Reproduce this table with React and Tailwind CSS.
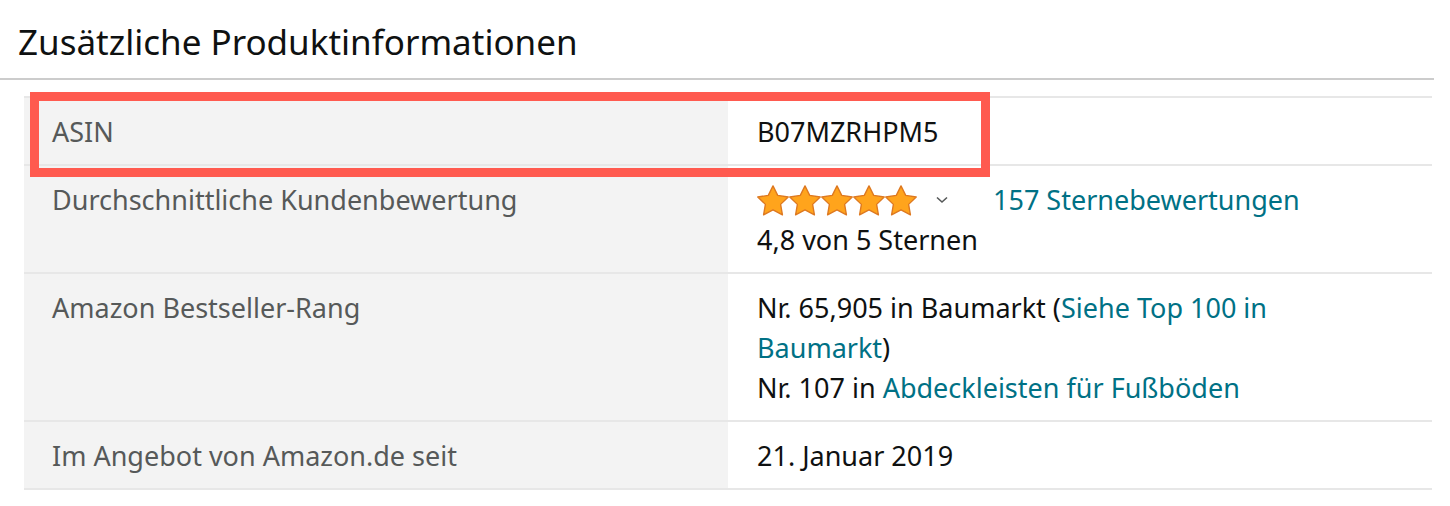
import React from "react";

const font = { fontFamily: '"Noto Sans", "Liberation Sans", sans-serif' };

function Star() {
  return (
    <svg width="32" height="31" viewBox="1.5 1.6 21 20" aria-hidden>
      <polygon
        points="12,2 15.09,8.26 22,9.27 17,14.14 18.18,21.02 12,17.77 5.82,21.02 7,14.14 2,9.27 8.91,8.26"
        fill="#ffa41c"
        stroke="#de7921"
        strokeWidth="0.9"
        strokeLinejoin="round"
      />
    </svg>
  );
}

function Row({ label, children, last }) {
  return (
    <div
      className={`grid grid-cols-[704px_1fr] border-t-2 border-[#e7e7e7] ${
        last ? "border-b-2" : ""
      }`}
    >
      <div className="bg-[#f3f3f3] px-[28px] pt-[14px] pb-[12px] leading-[40px] text-[#565959]">
        {label}
      </div>
      <div className="px-[29px] pt-[14px] pb-[12px] leading-[40px] text-[#0f1111]">
        {children}
      </div>
    </div>
  );
}

export default function App() {
  return (
    <div className="relative w-[1450px] h-[506px] bg-white overflow-hidden" style={font}>
      <h2 className="pl-[18px] pt-[22px] text-[35px] leading-[40px] text-[#0f1111] font-normal">
        Zusätzliche Produktinformationen
      </h2>
      <div className="mt-[16px] w-[1434px] h-[2px] bg-[#cccccc]" />

      <div className="mt-[16px] ml-[24px] w-[1408px] text-[27px]">
        <Row label="ASIN">B07MZRHPM5</Row>
        <Row label="Durchschnittliche Kundenbewertung">
          <div className="flex items-center h-[40px]">
            <div className="flex">
              <Star />
              <Star />
              <Star />
              <Star />
              <Star />
            </div>
            <svg className="ml-[19px]" width="12" height="8" viewBox="0 0 12 8" aria-hidden>
              <polyline points="1,1.5 6,6 11,1.5" fill="none" stroke="#565959" strokeWidth="1.6" />
            </svg>
            <a className="ml-[45px] text-[#007185]">157 Sternebewertungen</a>
          </div>
          <div>4,8 von 5 Sternen</div>
        </Row>
        <Row label="Amazon Bestseller-Rang">
          <div>
            Nr. 65,905 in Baumarkt (<a className="text-[#007185]">Siehe Top 100 in</a>
            <br />
            <a className="text-[#007185]">Baumarkt</a>)
          </div>
          <div>
            Nr. 107 in <a className="text-[#007185]">Abdeckleisten für Fußböden</a>
          </div>
        </Row>
        <Row label="Im Angebot von Amazon.de seit" last>
          21. Januar 2019
        </Row>
      </div>

      {/* Markierung um die ASIN-Zeile */}
      <div className="absolute left-[30px] top-[92px] w-[960px] h-[85px] border-[9px] border-[#ff5a4f] pointer-events-none" />
    </div>
  );
}
